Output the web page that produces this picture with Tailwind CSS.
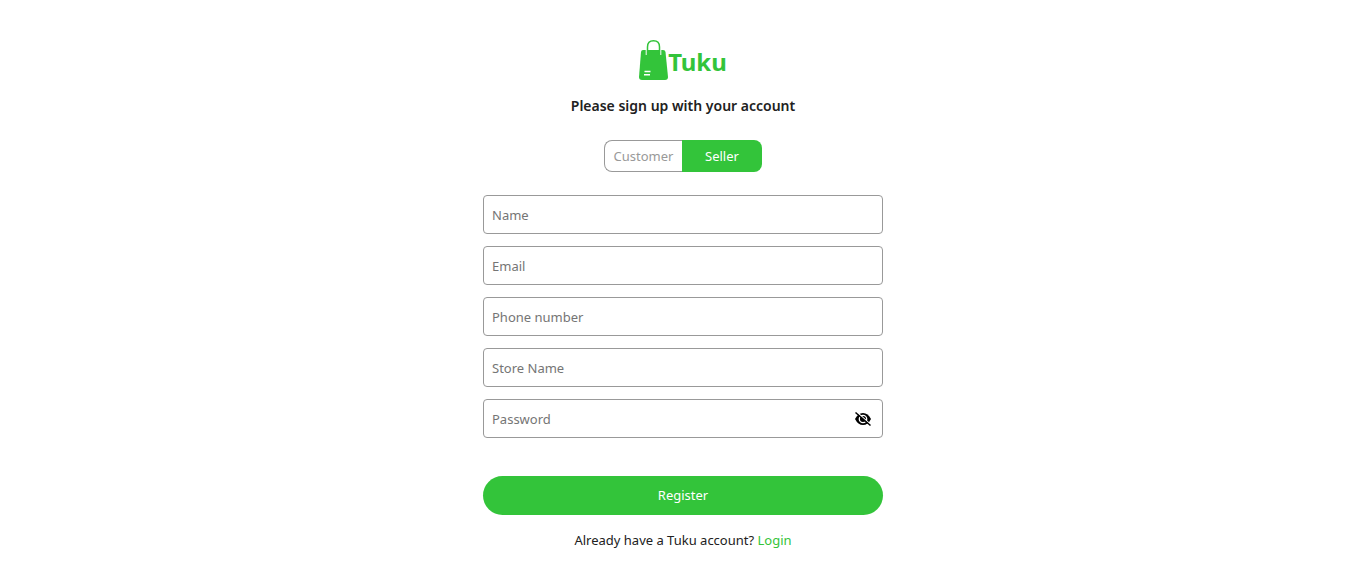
<!DOCTYPE html>
<html lang="en">
<head>
<meta charset="utf-8">
<meta name="viewport" content="width=device-width, initial-scale=1">
<title>Tuku - Register</title>
<script src="https://cdn.jsdelivr.net/npm/@tailwindcss/browser@4"></script>
</head>
<body class="bg-white font-['Noto_Sans',sans-serif] text-[13px] text-[#212121]">
<main class="mx-auto flex w-full max-w-[400px] flex-col items-center pt-10 pb-6">
  <div class="flex h-10 items-center">
    <svg class="h-10 w-[29px]" viewBox="0 0 29 40" aria-hidden="true">
      <path d="M4 10H24Q26.200 10 26.500 12L29 37Q29 40 26 40H3Q0 40 0 37L2 12Q2.200 10 4 10Z" fill="#33c43a"/>
      <path d="M7.300 9.500V15M21.700 9.500V15" stroke="#fff" stroke-width="1.200"/>
      <path d="M8.500 15V7Q8.500 .8 14.500 .8T20.500 7V15" fill="none" stroke="#33c43a" stroke-width="1.500"/>
      <path d="M5.500 31.500H11.500M5 34.800H11" stroke="#fff" stroke-width="1.500"/>
    </svg>
    <span class="pt-1 text-2xl leading-10 font-bold text-[#33c43a]">Tuku</span>
  </div>
  <h1 class="mt-4 text-sm leading-5 font-semibold">Please sign up with your account</h1>
  <div class="mt-6 flex h-8">
    <button type="button" class="w-[78px] rounded-l-lg border border-r-0 border-[#999] pt-px text-[#999]">Customer</button>
    <button type="button" class="w-20 rounded-r-lg bg-[#33c43a] pt-px text-white">Seller</button>
  </div>
  <form class="mt-[23px] w-full">
    <div class="grid gap-3">
      <input aria-label="Name" placeholder="Name" class="h-[39px] w-full rounded border border-[#999] px-2 placeholder:text-[#757575]">
      <input type="email" aria-label="Email" placeholder="Email" class="h-[39px] w-full rounded border border-[#999] px-2 placeholder:text-[#757575]">
      <input type="tel" aria-label="Phone number" placeholder="Phone number" class="h-[39px] w-full rounded border border-[#999] px-2 placeholder:text-[#757575]">
      <input aria-label="Store Name" placeholder="Store Name" class="h-[39px] w-full rounded border border-[#999] px-2 placeholder:text-[#757575]">
      <div class="relative">
        <input type="password" aria-label="Password" placeholder="Password" class="h-[39px] w-full rounded border border-[#999] pr-10 pl-2 placeholder:text-[#757575]">
        <button type="button" aria-label="Show password" class="absolute inset-y-0 right-3 flex items-center text-black">
          <svg class="size-4" viewBox="0 0 16 16" aria-hidden="true">
            <path d="M0 8Q3 2 8 2T16 8Q13 14 8 14T0 8Z" fill="currentColor"/>
            <circle cx="8" cy="8" r="3.700" fill="none" stroke="#fff" stroke-width="1.300"/>
            <path d="M1.500 .8L16 13.800" stroke="#fff" stroke-width="1.300"/>
            <path d="M.5 1.500L15.500 14.500" stroke="currentColor" stroke-width="1.500"/>
          </svg>
        </button>
      </div>
    </div>
    <button type="submit" class="mt-[38px] h-[39px] w-full rounded-full bg-[#33c43a] text-white">Register</button>
  </form>
  <p class="mt-[15px] leading-5">Already have a Tuku account? <a href="#" class="text-[#33c43a]">Login</a></p>
</main>
</body>
</html>
